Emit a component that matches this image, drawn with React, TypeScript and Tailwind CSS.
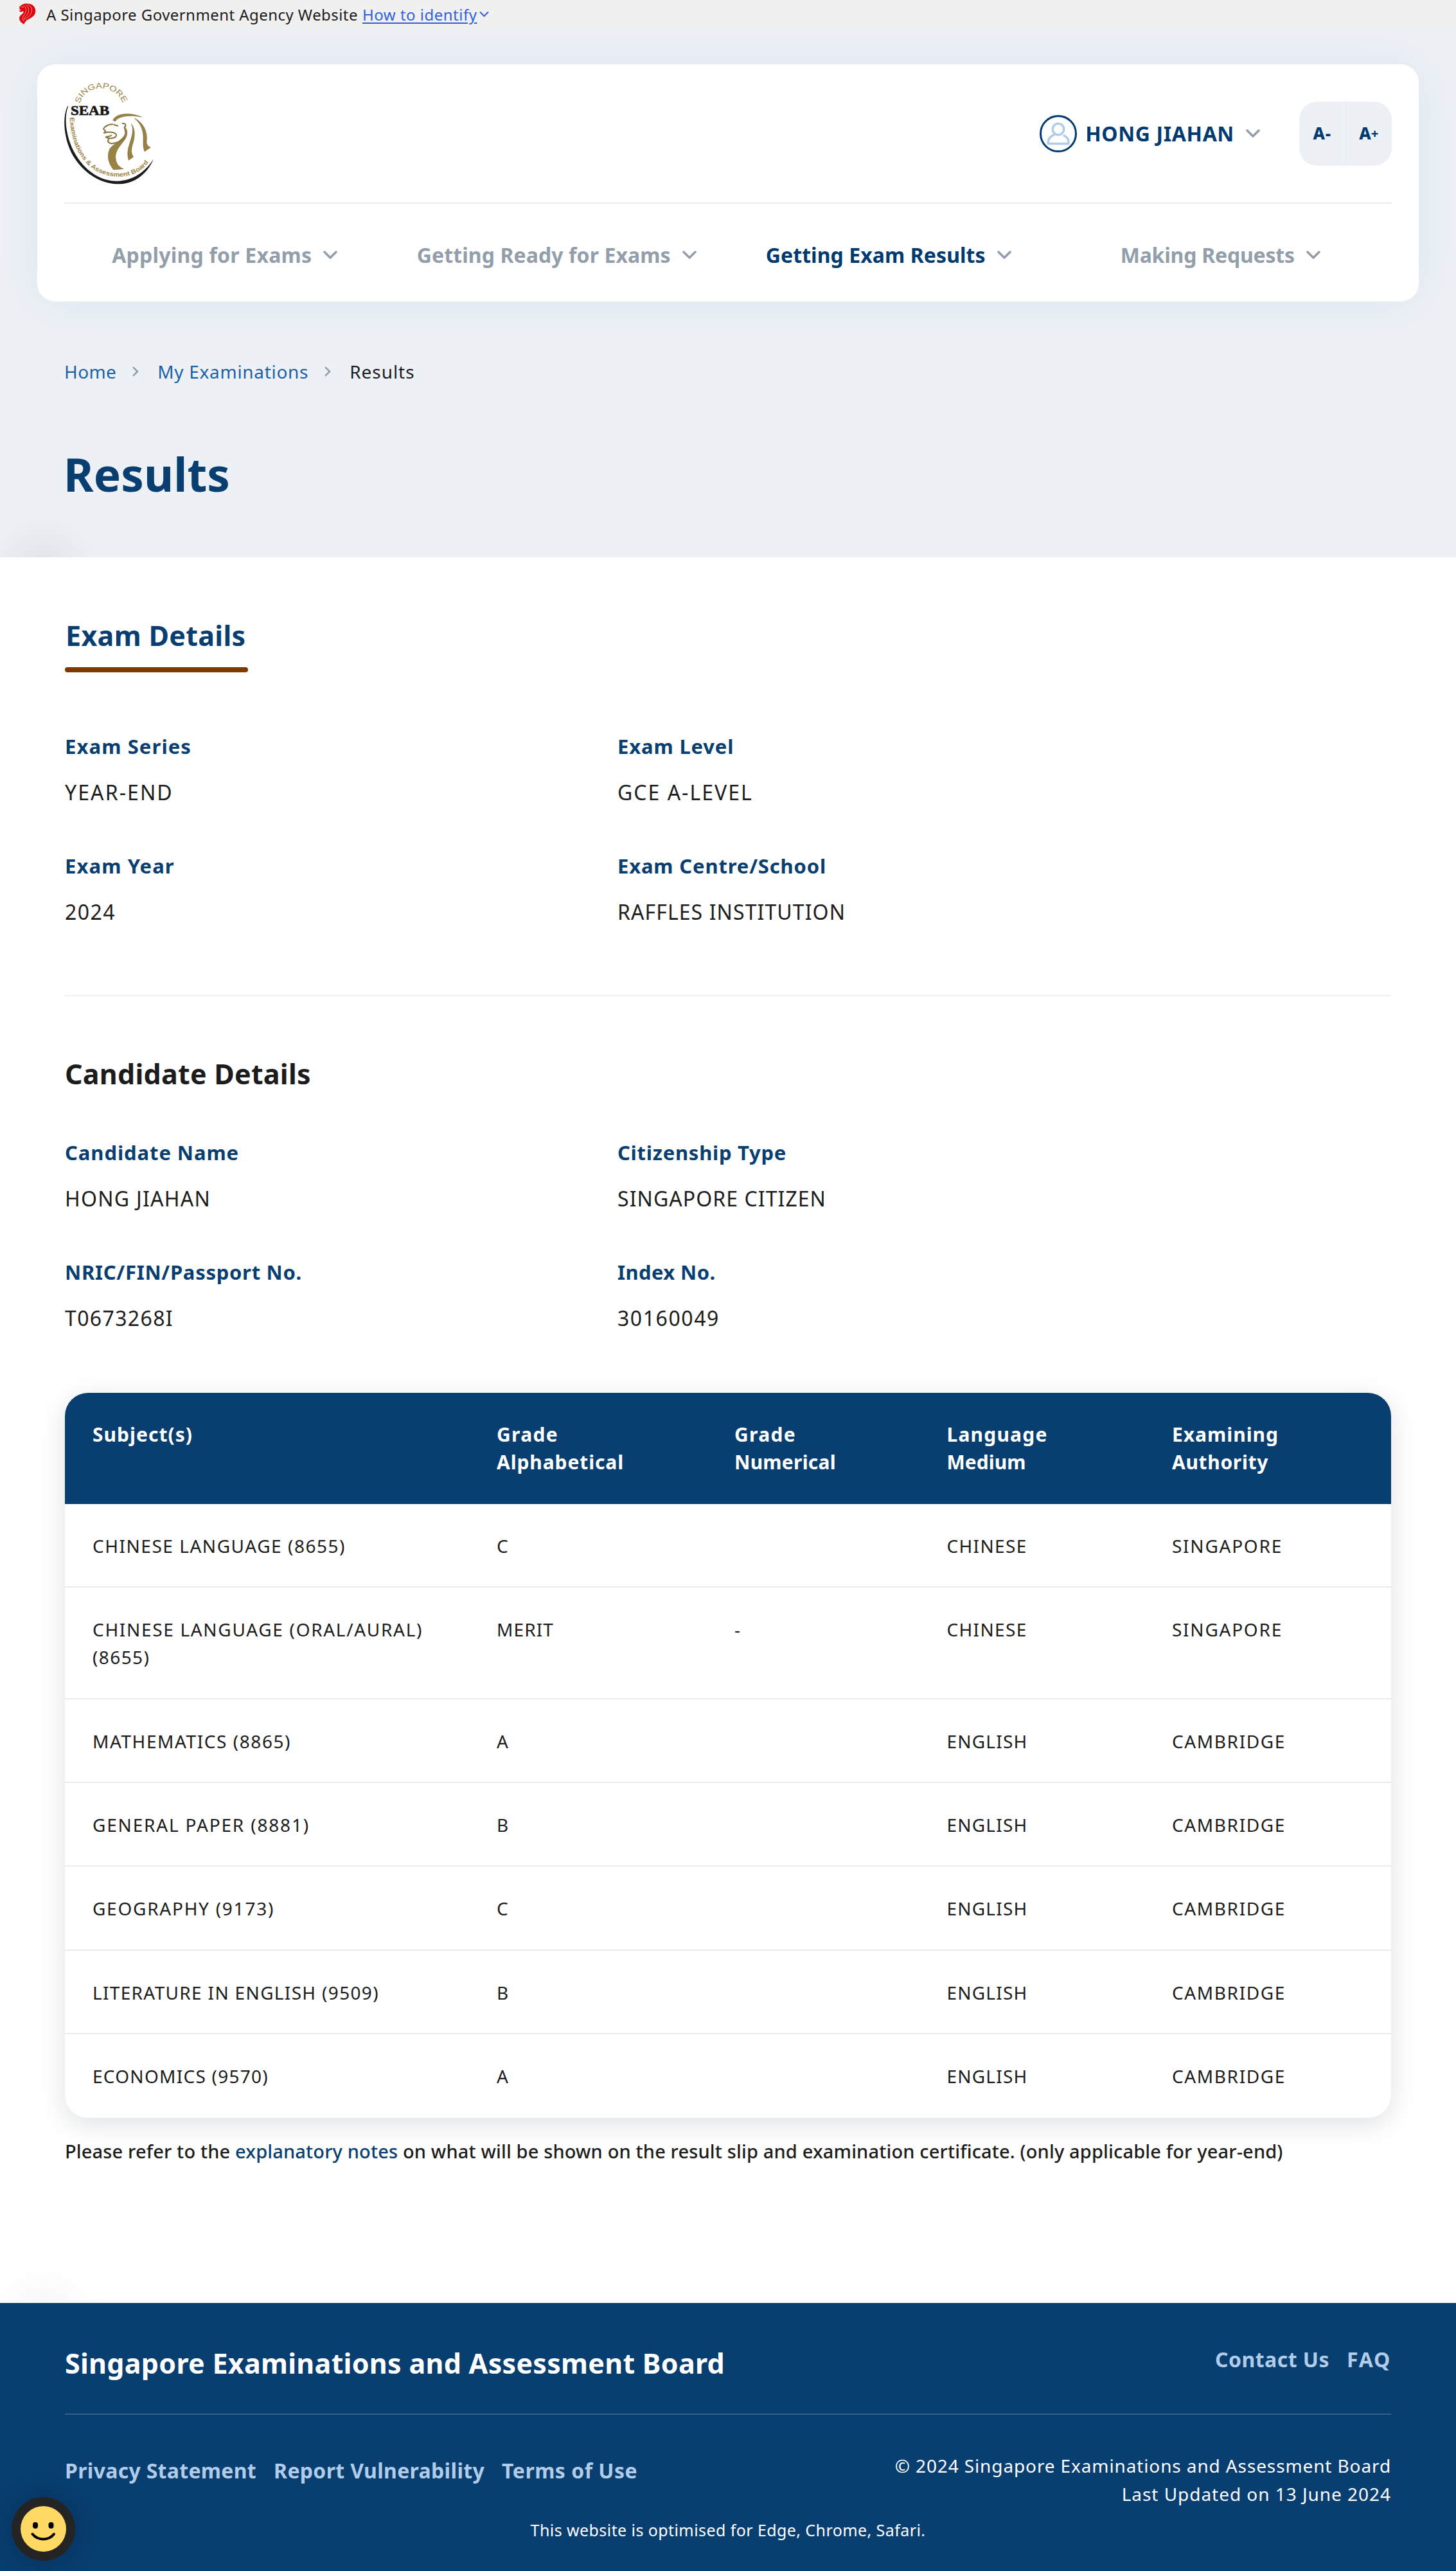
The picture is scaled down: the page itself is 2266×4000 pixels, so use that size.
import React from 'react';

type Text = { t: string; k: string };
type Field = { label: Text; value: Text };

const examFields: Field[] = [
  { label: { t: 'Exam Series', k: 'tracking-[1.1px]' }, value: { t: 'YEAR-END', k: 'tracking-[2.1px]' } },
  { label: { t: 'Exam Level', k: 'tracking-[0.85px]' }, value: { t: 'GCE A-LEVEL', k: 'tracking-[2px]' } },
  { label: { t: 'Exam Year', k: 'tracking-[1.1px]' }, value: { t: '2024', k: 'tracking-[1.45px]' } },
  { label: { t: 'Exam Centre/School', k: 'tracking-[0.84px]' }, value: { t: 'RAFFLES INSTITUTION', k: 'tracking-[1.08px]' } },
];

const candidateFields: Field[] = [
  { label: { t: 'Candidate Name', k: 'tracking-[0.92px]' }, value: { t: 'HONG JIAHAN', k: 'tracking-[1.26px]' } },
  { label: { t: 'Citizenship Type', k: 'tracking-[0.72px]' }, value: { t: 'SINGAPORE CITIZEN', k: 'tracking-[1.06px]' } },
  { label: { t: 'NRIC/FIN/Passport No.', k: 'tracking-[0.71px]' }, value: { t: 'T0673268I', k: 'tracking-[1.36px]' } },
  { label: { t: 'Index No.', k: 'tracking-[0.4px]' }, value: { t: '30160049', k: 'tracking-[1.57px]' } },
];

const nav = [
  { t: 'Applying for Exams', k: 'tracking-[0.21px]', active: false },
  { t: 'Getting Ready for Exams', k: 'tracking-[0.09px]', active: false },
  { t: 'Getting Exam Results', k: 'tracking-[0.07px]', active: true },
  { t: 'Making Requests', k: 'tracking-[-0.22px]', active: false },
];

const CHI: Text = { t: 'CHINESE', k: 'tracking-[1.33px]' };
const ENG: Text = { t: 'ENGLISH', k: 'tracking-[1.21px]' };
const SIN: Text = { t: 'SINGAPORE', k: 'tracking-[1.75px]' };
const CAM: Text = { t: 'CAMBRIDGE', k: 'tracking-[1.61px]' };

const rows: { subject: Text[]; grade: string; num: string; lang: Text; auth: Text }[] = [
  { subject: [{ t: 'CHINESE LANGUAGE (8655)', k: 'tracking-[1.53px]' }], grade: 'C', num: '', lang: CHI, auth: SIN },
  {
    subject: [
      { t: 'CHINESE LANGUAGE (ORAL/AURAL)', k: 'tracking-[1.68px]' },
      { t: '(8655)', k: 'tracking-[1.4px]' },
    ],
    grade: 'MERIT',
    num: '-',
    lang: CHI,
    auth: SIN,
  },
  { subject: [{ t: 'MATHEMATICS (8865)', k: 'tracking-[1.57px]' }], grade: 'A', num: '', lang: ENG, auth: CAM },
  { subject: [{ t: 'GENERAL PAPER (8881)', k: 'tracking-[1.82px]' }], grade: 'B', num: '', lang: ENG, auth: CAM },
  { subject: [{ t: 'GEOGRAPHY (9173)', k: 'tracking-[1.74px]' }], grade: 'C', num: '', lang: ENG, auth: CAM },
  { subject: [{ t: 'LITERATURE IN ENGLISH (9509)', k: 'tracking-[1.33px]' }], grade: 'B', num: '', lang: ENG, auth: CAM },
  { subject: [{ t: 'ECONOMICS (9570)', k: 'tracking-[1.26px]' }], grade: 'A', num: '', lang: ENG, auth: CAM },
];

const heads: Text[][] = [
  [{ t: 'Subject(s)', k: 'tracking-[1.03px]' }],
  [{ t: 'Grade', k: 'tracking-[1.33px]' }, { t: 'Alphabetical', k: 'tracking-[0.89px]' }],
  [{ t: 'Grade', k: 'tracking-[1.33px]' }, { t: 'Numerical', k: 'tracking-[0.24px]' }],
  [{ t: 'Language', k: 'tracking-[1.18px]' }, { t: 'Medium', k: 'tracking-[0.02px]' }],
  [{ t: 'Examining', k: 'tracking-[0.97px]' }, { t: 'Authority', k: 'tracking-[0.66px]' }],
];

function ChevronDown() {
  return (
    <svg width="22" height="13" viewBox="0 0 22 13" fill="none" stroke="#929eaa" strokeWidth="3.500" strokeLinecap="round" strokeLinejoin="round">
      <path d="M2 2l9 9 9-9" />
    </svg>
  );
}

function ChevronRight() {
  return (
    <svg width="10" height="16" viewBox="0 0 10 16" fill="none" stroke="#929eaa" strokeWidth="2.500" strokeLinecap="round" strokeLinejoin="round">
      <path d="M1.800 1.800L8 8l-6.200 6.200" />
    </svg>
  );
}

function GovLion() {
  return (
    <svg width="27" height="33" viewBox="89 13 81 100">
      <path
        fill="#e10008"
        d="M91 30C98 27 99 21 108 18C124 11 146 14 157 24C171 37 171 58 160 71C151 82 137 86 127 93C120 98 118 106 113 112C103 104 91 97 92 83C93 70 106 66 111 58C113 54 112 51 108 51C104 55 97 55 92 51L93 47L102 45L91 41L94 35Z"
      />
      <g fill="none" stroke="#f0f0f0" strokeWidth="2" strokeLinecap="round">
        <path d="M112 24C124 30 126 46 120 60C115 70 106 76 106 92" />
        <path d="M122 20C138 30 140 50 130 66C124 76 114 80 112 98" />
        <path d="M132 18C154 30 156 52 142 70C136 77 126 82 122 90" />
        <path d="M100 30L112 32" />
      </g>
    </svg>
  );
}

function SeabLogo() {
  return (
    <svg width="180" height="190" viewBox="0 0 540 570">
      <defs>
        <path id="arcTop" d="M132 154C158 62 288 56 333 148" />
        <path id="arcBottom" d="M86 218C90 320 122 402 186 452C270 518 420 514 474 392" />
      </defs>
      <path
        fill="#1c1c1c"
        d="M79 164C58 216 66 300 104 376C150 462 226 518 310 515C384 512 440 470 477 412C448 482 386 530 312 529C222 528 136 468 92 380C54 300 54 214 74 168Z"
      />
      <g fontFamily="'Liberation Sans', sans-serif" fill="#9a8340">
        <text fontSize="37" textLength="264" lengthAdjust="spacingAndGlyphs">
          <textPath href="#arcTop">SINGAPORE</textPath>
        </text>
        <text fontSize="29" fontWeight="700" textLength="560" lengthAdjust="spacingAndGlyphs">
          <textPath href="#arcBottom">Examinations &amp; Assessment Board</textPath>
        </text>
      </g>
      <text x="90" y="206" fontFamily="'Liberation Serif', serif" fontWeight="700" fontSize="66" fill="#151515" stroke="#151515" strokeWidth="2" textLength="180" lengthAdjust="spacingAndGlyphs">
        SEAB
      </text>
      <g fill="#9a8340" stroke="#5f5229" strokeWidth="1.500">
        <path d="M287 232C300 198 366 192 421 216C372 206 312 210 299 236Z" />
        <path d="M388 222C432 244 450 288 444 330C443 346 452 353 463 358L435 377C426 352 430 332 429 304C427 268 412 242 388 222Z" />
        <path d="M373 248C394 274 390 312 377 350C371 374 374 390 383 402L361 418C353 392 356 368 366 338C378 300 386 272 373 248Z" />
        <path d="M340 260C358 276 356 296 346 316C326 348 300 366 299 402C300 434 316 452 337 458L290 462C266 432 258 400 272 366C284 344 334 324 343 296C347 284 338 272 340 260Z" />
      </g>
      <g fill="none" stroke="#86733a" strokeWidth="6" strokeLinecap="round" strokeLinejoin="round">
        <path d="M286 250C266 250 248 260 243 272L253 282L246 290" />
        <path d="M292 252L310 257" />
        <path d="M332 246C348 244 350 258 341 264" />
        <path d="M248 290C274 282 304 288 303 302C300 316 270 320 254 310C262 306 274 308 280 302" />
        <path d="M268 318C258 332 270 344 292 338C316 334 332 324 344 310" />
      </g>
    </svg>
  );
}

function Fields({ items }: { items: Field[] }) {
  return (
    <div className="grid grid-cols-[860px_860px] gap-y-[74px]">
      {items.map((f) => (
        <div key={f.label.t} className="flex flex-col gap-[32px] leading-10">
          <div className={`text-[31px] font-bold text-[#083e70] ${f.label.k}`}>{f.label.t}</div>
          <div className={`text-[32px] text-[#1c1c1c] ${f.value.k}`}>{f.value.t}</div>
        </div>
      ))}
    </div>
  );
}

function Lines({ items }: { items: Text[] }) {
  return (
    <div>
      {items.map((x) => (
        <div key={x.t} className={x.k}>
          {x.t}
        </div>
      ))}
    </div>
  );
}

const cols = 'grid grid-cols-[629px_370px_330.5px_350.5px_1fr] pl-[43px]';

export default function App() {
  return (
    <div className="relative flex h-[4000px] w-[2266px] flex-col overflow-hidden whitespace-nowrap bg-white font-['Noto_Sans',sans-serif] text-[#1c1c1c]">
      <div className="relative z-10 flex h-[43px] items-center bg-[#f0f0f0] pl-[29px] text-[24px] leading-8">
        <GovLion />
        <span className="ml-4 pt-[3px] tracking-[0.44px]">A Singapore Government Agency Website</span>
        <span className="ml-[7px] pt-[3px] tracking-[0.5px] text-[#2f60d8] underline decoration-2 underline-offset-[3px]">How to identify</span>
        <svg className="ml-[4px]" width="15" height="10" viewBox="0 0 15 10" fill="none" stroke="#2f60d8" strokeWidth="2">
          <path d="M1 1.500l6.500 6.500 6.500-6.500" />
        </svg>
      </div>

      <header className="relative h-[824px] overflow-hidden bg-[#edf1f6] pt-[57px]">
        <div className="absolute -bottom-[110px] -left-[22px] size-[180px] rounded-full bg-[radial-gradient(closest-side,rgba(0,0,0,0.06),transparent)]" />
        <div className="mx-[58px] h-[369px] rounded-[28px] bg-white px-[42px] shadow-[0_2px_70px_rgba(20,80,150,0.07)]">
          <div className="flex h-[217px] items-center border-b-2 border-[#e9eef4]">
            <div className="-ml-5 mt-[-6px]">
              <SeabLogo />
            </div>
            <div className="ml-auto flex items-center">
              <svg width="58" height="58" viewBox="0 0 58 58" fill="none">
                <circle cx="29" cy="29" r="27.500" stroke="#003a70" strokeWidth="3" />
                <g stroke="#b0cce8" strokeWidth="3.500" strokeLinecap="round" strokeLinejoin="round">
                  <ellipse cx="29" cy="22" rx="8.800" ry="8.800" />
                  <path d="M22 31C16 33 13 37 13 44.500H45C45.500 38 43 34 38 32" />
                </g>
              </svg>
              <span className="ml-[13px] text-[32px] font-bold tracking-[0.6px] text-[#003a70]">HONG JIAHAN</span>
              <span className="ml-[18px]">
                <ChevronDown />
              </span>
              <div className="ml-[61px] flex h-[100px] w-[144px] divide-x divide-[#e2e8ef] rounded-[28px] bg-[#edf1f6] text-[26px] font-extrabold text-[#003a70]">
                <span className="flex flex-1 items-center justify-center tracking-[1px]">A<span className="font-sans text-[26px]">-</span></span>
                <span className="flex flex-1 items-center justify-center">
                  A<span className="text-[20px]">+</span>
                </span>
              </div>
            </div>
          </div>
          <nav className="grid h-[152px] grid-cols-4 pt-[7px]">
            {nav.map((n) => (
              <div key={n.t} className="flex items-center justify-center gap-[18px] pr-[17px]">
                <span className={`text-[32px] font-bold ${n.active ? 'text-[#003a70]' : 'text-[#929eaa]'} ${n.k}`}>{n.t}</span>
                <ChevronDown />
              </div>
            ))}
          </nav>
        </div>
        <div className="mt-[89px] flex h-10 items-center pl-[100px] text-[28px] leading-10 text-[#1a60a8]">
          <span className="tracking-[0.4px]">Home</span>
          <span className="ml-[25px]"><ChevronRight /></span>
          <span className="ml-[29px] tracking-[0.7px]">My Examinations</span>
          <span className="ml-[25px]"><ChevronRight /></span>
          <span className="ml-[29px] tracking-[0.95px] text-[#1c1c1c]">Results</span>
        </div>
        <h1 className="mt-[98px] pl-[99px] text-[71px] font-bold leading-[84px] tracking-[0.1px] text-[#083e70]">Results</h1>
      </header>

      <main className="relative h-[2716px] overflow-hidden px-[101px] pt-[92px]">
        <div className="absolute -bottom-[120px] -left-[22px] size-[180px] rounded-full bg-[radial-gradient(closest-side,rgba(0,0,0,0.04),transparent)]" />
        <div className="w-[285px]">
          <h2 className="pl-[1px] text-[43px] font-bold leading-[60px] tracking-[0.32px] text-[#083e70]">Exam Details</h2>
          <div className="mt-[19px] h-2 rounded-full bg-[#7c3a00]" />
        </div>
        <div className="mt-[95px]">
          <Fields items={examFields} />
        </div>
        <div className="mt-[109px] h-[2px] bg-[#edf1f6]" />
        <h2 className="mt-[91px] text-[43px] font-bold leading-[60px] tracking-[0.25px]">Candidate Details</h2>
        <div className="mt-[72px]">
          <Fields items={candidateFields} />
        </div>

        <div className="mt-[96px] overflow-hidden rounded-[36px] bg-white shadow-[0_10px_40px_rgba(10,20,50,0.13)]">
          <div className={`${cols} h-[173px] bg-[#083e70] pt-[43px] text-[30px] font-bold leading-[43px] text-white`}>
            {heads.map((h, i) => (
              <Lines key={i} items={h} />
            ))}
          </div>
          {rows.map((r, i) => (
            <div
              key={i}
              className={`${cols} pt-[44px] text-[28px] leading-[43px] ${r.subject.length > 1 ? 'h-[173.500px]' : 'h-[130.300px]'} ${i < rows.length - 1 ? 'border-b-2 border-[#e9ebee]' : ''}`}
            >
              <Lines items={r.subject} />
              <span className="tracking-[1.1px]">{r.grade}</span>
              <span>{r.num}</span>
              <span className={r.lang.k}>{r.lang.t}</span>
              <span className={r.auth.k}>{r.auth.t}</span>
            </div>
          ))}
        </div>

        <p className="mt-[30px] text-[29px] font-medium leading-[44px] tracking-[0.15px]">
          Please refer to the <span className="text-[#083e70]">explanatory notes</span> on what will be shown on the result slip and examination certificate. (only applicable for year-end)
        </p>
      </main>

      <footer className="h-[417px] bg-[#083e70] px-[101px] pt-[64px] text-white">
        <div className="flex items-start justify-between">
          <span className="text-[43px] font-bold leading-[60px] tracking-[0.28px]">Singapore Examinations and Assessment Board</span>
          <div className="flex gap-[27px] text-[32px] font-bold leading-[48px] text-[#b0cce8]">
            <span className="tracking-[0.46px]">Contact Us</span>
            <span className="tracking-[1.75px]">FAQ</span>
          </div>
        </div>
        <div className="mt-[48px] h-[2px] bg-[#33628f]" />
        <div className="mt-[58px] flex items-start justify-between">
          <div className="flex gap-[27px] pt-[5px] text-[32px] font-bold leading-[48px] text-[#b0cce8]">
            <span className="tracking-[0.3px]">Privacy Statement</span>
            <span className="tracking-[0.33px]">Report Vulnerability</span>
            <span className="tracking-[0.48px]">Terms of Use</span>
          </div>
          <div className="text-right text-[28px] leading-[43.500px]">
            <div className="tracking-[0.88px]">© 2024 Singapore Examinations and Assessment Board</div>
            <div className="tracking-[0.96px]">Last Updated on 13 June 2024</div>
          </div>
        </div>
        <div className="mt-[14px] text-center text-[25px] leading-10 tracking-[0.42px]">This website is optimised for Edge, Chrome, Safari.</div>
      </footer>

      <div className="absolute left-[18px] top-[3885px] flex size-[99px] items-center justify-center rounded-full bg-[#242424] shadow-[0_2px_40px_rgba(0,0,0,0.2)]">
        <svg width="71" height="71" viewBox="0 0 71 71">
          <circle cx="35.500" cy="35.500" r="35.500" fill="#ffd964" />
          <rect x="19" y="25" width="8" height="10" rx="4" />
          <rect x="43.500" y="25" width="8" height="10" rx="4" />
          <path d="M18.500 43.500C27 54 44 54 52 43.500" fill="none" stroke="#000" strokeWidth="4" strokeLinecap="round" />
        </svg>
      </div>
    </div>
  );
}
